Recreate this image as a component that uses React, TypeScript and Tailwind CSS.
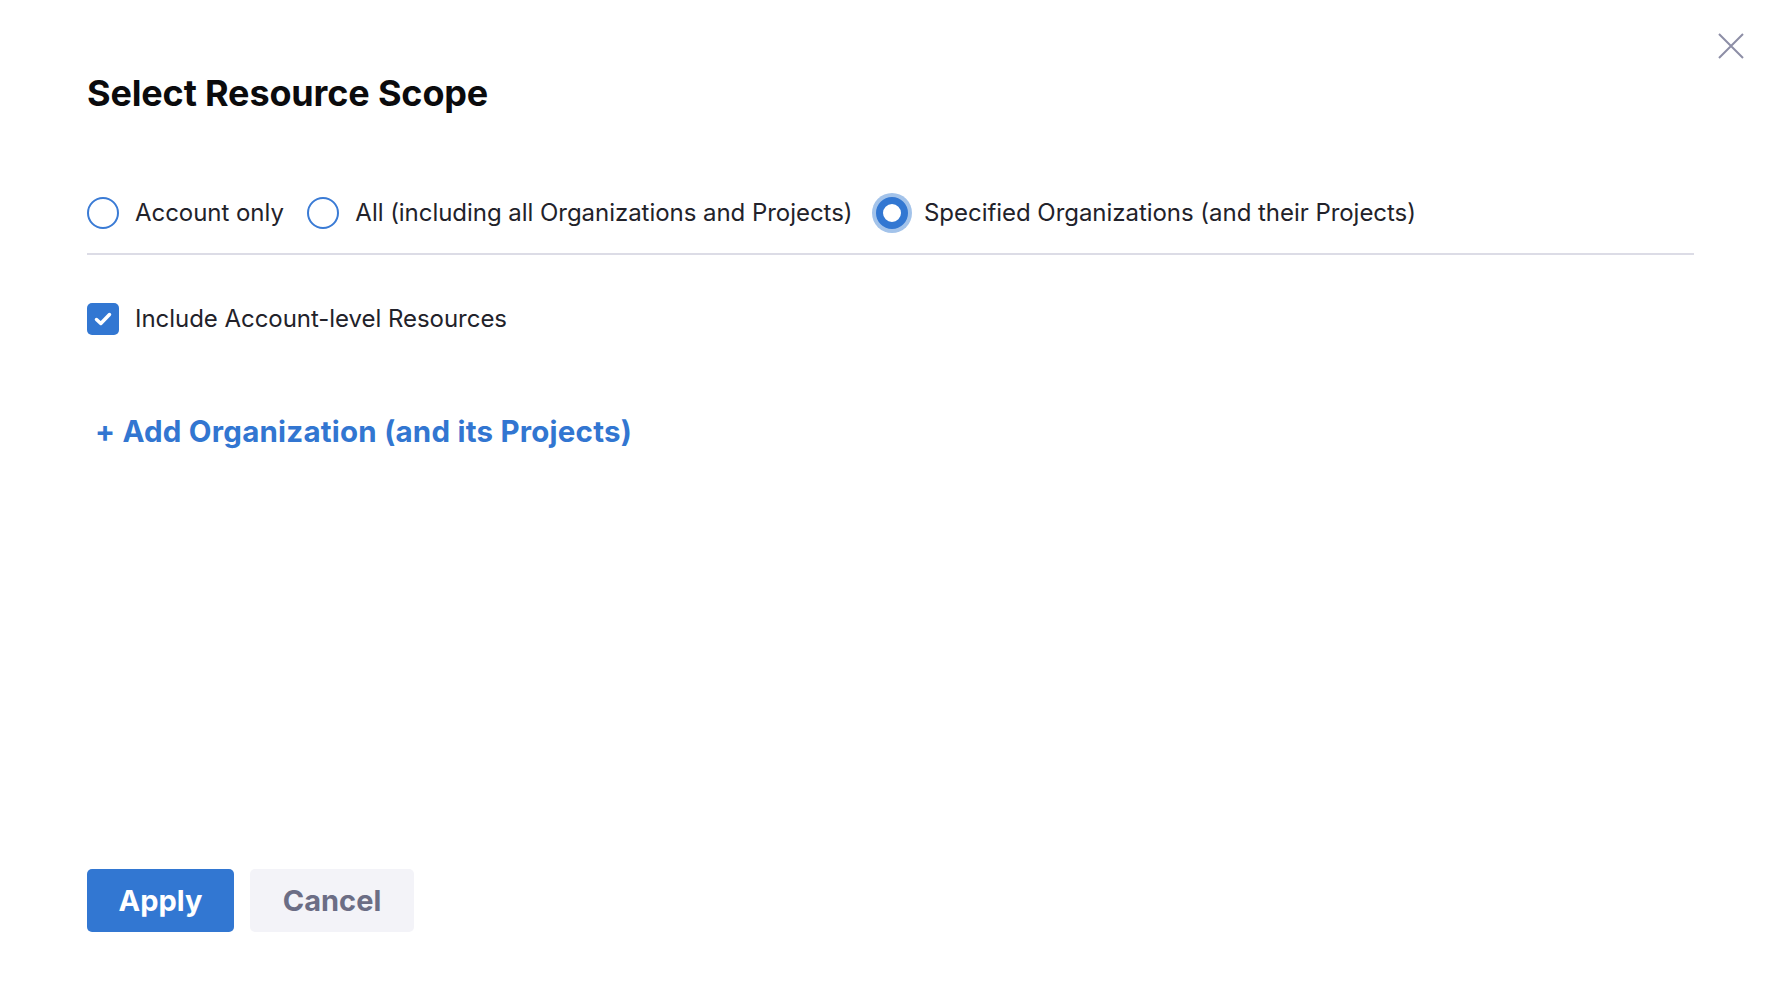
import { useState } from 'react';

type Scope = 'account' | 'all' | 'specified';

const SCOPES: { id: Scope; label: string }[] = [
  { id: 'account', label: 'Account only' },
  { id: 'all', label: 'All (including all Organizations and Projects)' },
  { id: 'specified', label: 'Specified Organizations (and their Projects)' },
];

function Radio({ checked }: { checked: boolean }) {
  if (checked) {
    return (
      <span className="flex h-[32px] w-[32px] shrink-0 items-center justify-center rounded-full border-[7px] border-[#3277d2] bg-white shadow-[0_0_0_4px_#a3c3ea]" />
    );
  }
  return <span className="block h-[32px] w-[32px] shrink-0 rounded-full border-2 border-[#3a7bd5] bg-white" />;
}

export default function App() {
  const [scope, setScope] = useState<Scope>('specified');
  const [includeAccount, setIncludeAccount] = useState(true);

  return (
    <div
      className="relative flex h-[1005px] w-full flex-col bg-white pl-[87px] pr-[80px] pt-[71px] pb-[73px] text-[#22222a]"
      style={{ fontFamily: 'Inter, "Noto Sans", sans-serif' }}
    >
      {/* close */}
      <button className="absolute right-[30px] top-[33px] text-[#8d8ea6]" aria-label="Close">
        <svg width="26" height="26" viewBox="0 0 26 26" fill="none" stroke="currentColor" strokeWidth="2">
          <path d="M1 1L25 25M25 1L1 25" />
        </svg>
      </button>

      <h1 className="text-[36px] font-bold leading-[44px] tracking-[-0.15px] text-[#0b0b0d]">Select Resource Scope</h1>

      {/* scope options */}
      <div className="mt-[82px] flex items-center gap-[23.5px] border-b-2 border-[#dcdce6] pb-[24px]">
        {SCOPES.map((s) => (
          <label key={s.id} className="flex cursor-pointer items-center gap-[16px]" onClick={() => setScope(s.id)}>
            <Radio checked={scope === s.id} />
            <span className="text-[24px] leading-[32px] tracking-[-0.04px]">{s.label}</span>
          </label>
        ))}
      </div>

      {/* account level */}
      <label className="mt-[48px] flex cursor-pointer items-center gap-[16px]" onClick={() => setIncludeAccount(!includeAccount)}>
        <span
          className={
            includeAccount
              ? 'flex h-[32px] w-[32px] items-center justify-center rounded-[5px] bg-[#3277d2]'
              : 'flex h-[32px] w-[32px] items-center justify-center rounded-[5px] border-2 border-[#b0b1c4] bg-white'
          }
        >
          {includeAccount && (
            <svg width="32" height="32" viewBox="0 0 32 32" fill="none" stroke="white" strokeWidth="3.5" strokeLinecap="round" strokeLinejoin="round">
              <path d="M9.5 16.5L13.8 20.5L22.5 11.5" />
            </svg>
          )}
        </span>
        <span className="text-[24px] leading-[32px] tracking-[-0.04px]">Include Account-level Resources</span>
      </label>

      <button className="ml-[8px] mt-[78px] self-start text-[29.5px] font-bold leading-[36px] tracking-[0.22px] text-[#3276d1]">
        + Add Organization (and its Projects)
      </button>

      {/* footer */}
      <div className="mt-auto flex gap-[16px]">
        <button className="h-[63px] w-[147px] rounded-[5px] bg-[#3277d2] text-[29px] font-bold text-white">Apply</button>
        <button className="h-[63px] w-[164px] rounded-[5px] bg-[#f3f3f8] text-[29px] font-bold text-[#6b6d85]">Cancel</button>
      </div>
    </div>
  );
}
